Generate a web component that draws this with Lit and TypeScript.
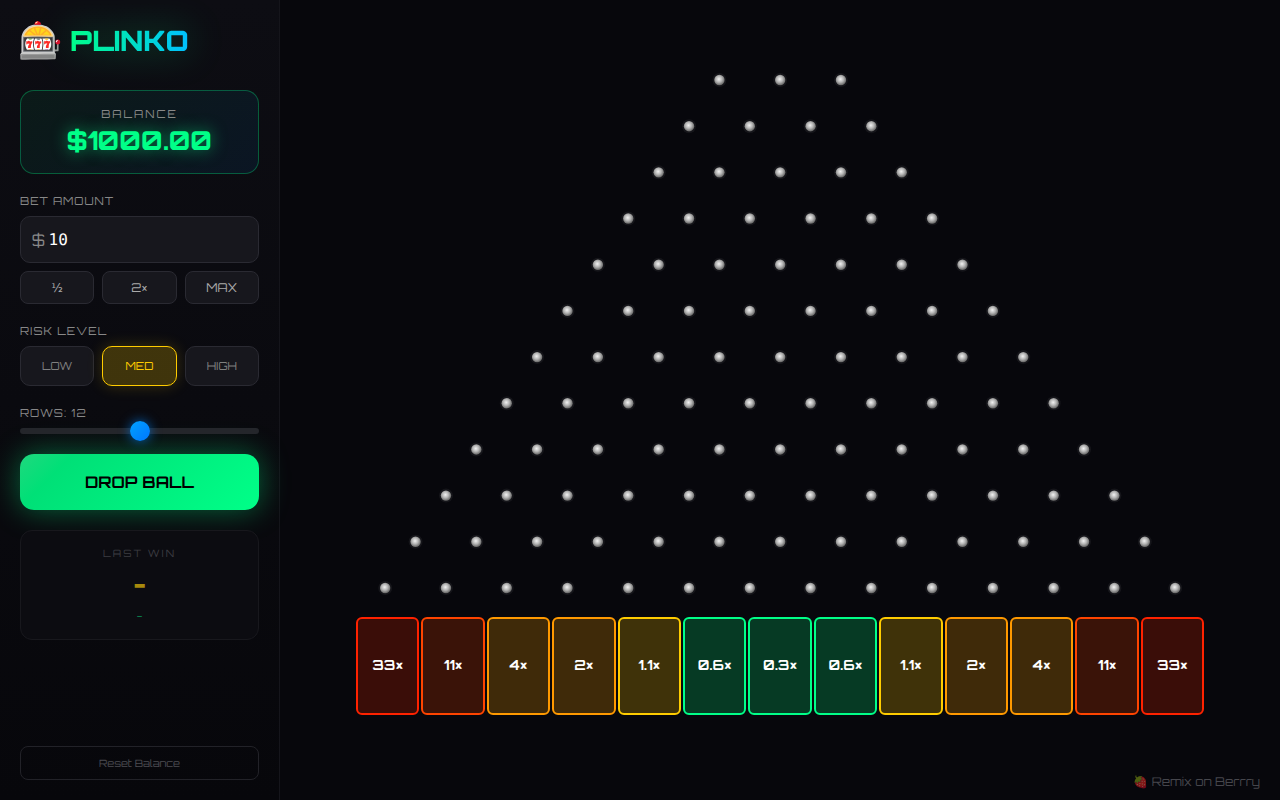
import { LitElement, html, css, svg } from "lit";
import { customElement } from "lit/decorators.js";

const BUCKETS: [string, string][] = [
  ["33×", "red"], ["11×", "ora"], ["4×", "amb"], ["2×", "amb"], ["1.1×", "yel"], ["0.6×", "grn"], ["0.3×", "grn"],
  ["0.6×", "grn"], ["1.1×", "yel"], ["2×", "amb"], ["4×", "amb"], ["11×", "ora"], ["33×", "red"],
];

@customElement("app-root")
export class AppRoot extends LitElement {
  static styles = css`
    :host { display: block; width: 1280px; height: 800px; background: #07070c; font-family: Orbitron, "DejaVu Sans", sans-serif; color: #fff; overflow: hidden; position: relative; text-rendering: geometricPrecision; }
    .app { display: flex; height: 800px; }
    .side { width: 280px; box-sizing: border-box; border-right: 1px solid #15151b; padding: 20px; background: linear-gradient(180deg, #0d0d13, #07070b); display: flex; flex-direction: column; }
    .logo { display: flex; align-items: center; height: 40px; margin-bottom: 30px; }
    .emoji { font-size: 36px; line-height: 40px; width: 50px; margin-left: -2px; margin-top: 1px; flex: none; font-family: "Noto Color Emoji", sans-serif; }
    .title { margin-top: 2px; margin-left: 2px; font-size: 28px; font-weight: 900; line-height: 40px; background: linear-gradient(90deg, #00ff88, #00bfff); -webkit-background-clip: text; background-clip: text; color: transparent; filter: drop-shadow(0 0 18px rgba(0,255,136,.35)); }
    .balance { height: 84px; box-sizing: border-box; border: 1px solid rgba(0,255,136,.3); border-radius: 14px; background: linear-gradient(135deg, rgba(0,255,136,.06), rgba(0,136,255,.08)); text-align: center; padding-top: 15px; margin-bottom: 20px; }
    .balance .l { font-size: 11px; letter-spacing: 2px; color: #888; line-height: 16px; }
    .balance .v { font-size: 26px; font-weight: 800; color: #00ff88; line-height: 36px; margin-top: 1px; text-shadow: 0 0 16px rgba(0,255,136,.5); }
    .lab { font-size: 11px; letter-spacing: 1px; color: #888; line-height: 14px; margin-bottom: 8px; }
    .input { height: 47px; box-sizing: border-box; border: 1px solid #2a2a32; border-radius: 10px; background: #17171d; display: flex; align-items: center; padding: 0 11px; gap: 4px; margin-bottom: 8px; }
    .input .d { color: #888; font-size: 16px; }
    .input .n { font-family: "DejaVu Sans Mono", monospace; font-size: 16px; color: #fff; }
    .row { display: grid; grid-template-columns: 1fr 1fr 1fr; gap: 8px; }
    .q { height: 33px; margin-bottom: 20px; }
    .btn { display: flex; align-items: center; justify-content: center; box-sizing: border-box; border: 1px solid #2a2a32; background: #17171d; color: #aaa; font-size: 12px; border-radius: 8px; }
    .risk { height: 40px; margin-bottom: 20px; }
    .risk .btn { border-radius: 10px; color: #808080; font-size: 11px; }
    .risk .on { border-color: #ffcc00; background: rgba(255,204,0,.22); color: #ffcc00; box-shadow: 0 0 15px rgba(255,204,0,.2); }
    .slider { height: 6px; margin: 0 0 20px; border-radius: 3px; background: #24262b; position: relative; }
    .thumb { position: absolute; left: 110px; top: -7px; width: 20px; height: 20px; border-radius: 50%; background: linear-gradient(135deg, #00a2ff, #0077ff); box-shadow: 0 0 12px rgba(0,136,255,.7); }
    .drop { height: 56px; border-radius: 14px; background: linear-gradient(135deg, #1fd87e 0%, #00e077 18%, #00ff88 100%); color: #000; font-size: 16px; font-weight: 700; display: flex; align-items: center; justify-content: center; box-shadow: 0 0 30px rgba(0,255,136,.38); margin-bottom: 20px; }
    .last { height: 110px; box-sizing: border-box; border: 1px solid #18181d; border-radius: 12px; background: #0c0c11; text-align: center; padding-top: 16px; }
    .last .l { font-size: 10px; letter-spacing: 2px; color: #3c3c42; line-height: 14px; }
    .last .v { font-size: 24px; font-weight: 900; color: #a88a0c; line-height: 30px; margin-top: 8px; }
    .last .s { font-size: 12px; color: #0a7a4a; line-height: 16px; margin-top: 9px; }
    .reset { margin-top: auto; height: 34px; box-sizing: border-box; border: 1px solid #222228; border-radius: 8px; display: flex; align-items: center; justify-content: center; font-size: 10px; padding-top: 1px; color: #4c4c52; }
    .main { flex: 1; display: flex; flex-direction: column; align-items: center; }
    .board { display: block; width: 1000px; height: 617px; flex: none; }
    .buckets { display: flex; gap: 2px; width: 848px; }
    .b { flex: 1; height: 98px; padding-bottom: 1px; box-sizing: border-box; border: 2px solid; border-radius: 6px; display: flex; align-items: center; justify-content: center; font-size: 14px; font-weight: 700; color: #fff; }
    .red { border-color: #ff2200; background: #3a0d08; }
    .ora { border-color: #ff4400; background: #3a1308; }
    .amb { border-color: #ff9900; background: #3f2a09; }
    .yel { border-color: #ffcc00; background: #3f3209; }
    .grn { border-color: #00ff88; background: #063a24; }
    .foot { position: absolute; right: 20px; bottom: 10px; font-size: 12px; color: #46464c; line-height: 16px; display: flex; gap: 4px; align-items: center; }
    .foot .e { font-family: "Noto Color Emoji", sans-serif; opacity: .5; font-size: 12px; }
  `;

  private pegs() {
    const out = [];
    for (let r = 0; r < 12; r++) {
      const n = r + 3;
      for (let i = 0; i < n; i++) {
        const x = 500.2 + (i - (n - 1) / 2) * 60.77;
        const y = 80 + r * 46.18;
        out.push(svg`<circle cx=${x} cy=${y} r="7" fill="rgba(255,255,255,.06)" /><circle cx=${x} cy=${y} r="5.2" fill="url(#peg)" />`);
      }
    }
    return out;
  }

  render() {
    return html`<div class="app">
      <aside class="side">
        <div class="logo"><span class="emoji">🎰</span><span class="title">PLINKO</span></div>
        <div class="balance"><div class="l">BALANCE</div><div class="v">$1000.00</div></div>
        <div class="lab">BET AMOUNT</div>
        <div class="input"><span class="d">$</span><span class="n">10</span></div>
        <div class="row q"><div class="btn">½</div><div class="btn">2×</div><div class="btn">MAX</div></div>
        <div class="lab">RISK LEVEL</div>
        <div class="row risk"><div class="btn">LOW</div><div class="btn on">MED</div><div class="btn">HIGH</div></div>
        <div class="lab">ROWS: 12</div>
        <div class="slider"><div class="thumb"></div></div>
        <div class="drop">DROP BALL</div>
        <div class="last"><div class="l">LAST WIN</div><div class="v">-</div><div class="s">-</div></div>
        <div class="reset">Reset Balance</div>
      </aside>
      <main class="main">
        <svg class="board" viewBox="0 0 1000 617">
          <defs><radialGradient id="peg" cx="45%" cy="42%" r="60%"><stop offset="0%" stop-color="#f2f2f2"/><stop offset="50%" stop-color="#b4b4b4"/><stop offset="100%" stop-color="#5e5e5e"/></radialGradient></defs>
          ${this.pegs()}
        </svg>
        <div class="buckets">${BUCKETS.map(([t, c]) => html`<div class="b ${c}">${t}</div>`)}</div>
      </main>
    </div>
    <div class="foot"><span class="e">🍓</span><span>Remix on Berrry</span></div>`;
  }
}
